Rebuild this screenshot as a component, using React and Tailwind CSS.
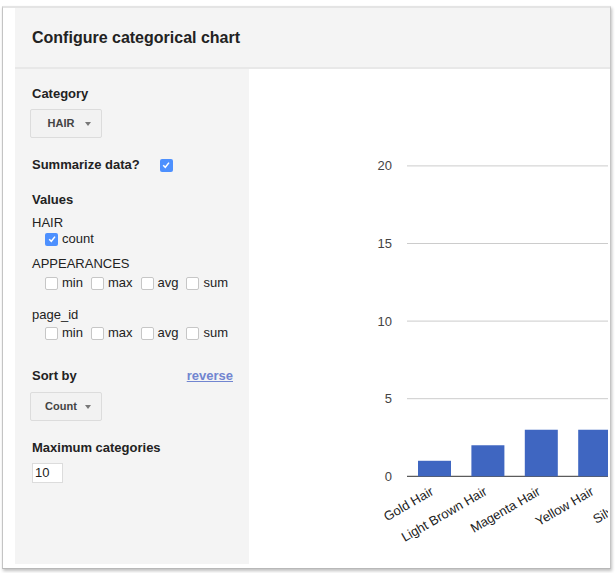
import React from "react";

const bars = [
  { label: "Gold Hair", value: 1 },
  { label: "Light Brown Hair", value: 2 },
  { label: "Magenta Hair", value: 3 },
  { label: "Yellow Hair", value: 3 },
  { label: "Silver Hair", value: 3 },
];

const ticks = [0, 5, 10, 15, 20];
const zeroY = 407.3;
const unit = 15.52;

function Check({ on }) {
  return on ? (
    <span className="inline-flex h-[13px] w-[13px] shrink-0 items-center justify-center rounded-[2px] bg-[#4d90fe]">
      <svg viewBox="0 0 10 10" className="h-[10px] w-[10px]">
        <path d="M2.2 5.2 4.3 7.3 8 2.6" fill="none" stroke="#fff" strokeWidth="1.5" />
      </svg>
    </span>
  ) : (
    <span className="inline-block h-[13px] w-[13px] shrink-0 rounded-[2px] border border-[#c6c6c6] bg-white" />
  );
}

function Dropdown({ label }) {
  return (
    <div className="ml-[-2px] flex h-[29px] w-[72px] items-center rounded-[2px] border border-[#dcdcdc] bg-[#f2f2f2] pl-[6px] pr-[10px] text-[11px] font-bold text-[#444]">
      <span className="flex-1 text-center">{label}</span>
      <span className="h-0 w-0 border-x-[3.5px] border-t-[4px] border-x-transparent border-t-[#777]" />
    </div>
  );
}

function AggRow({ className }) {
  return (
    <div className={`flex h-[16px] items-center gap-[8px] pl-[13px] ${className}`}>
      {["min", "max", "avg", "sum"].map((a) => (
        <label key={a} className="flex items-center gap-[4px]">
          <Check />
          <span>{a}</span>
        </label>
      ))}
    </div>
  );
}

function Chart() {
  return (
    <svg width="359" height="495" className="block font-['Liberation_Sans',Arial,sans-serif]">
      {ticks.map((t) => {
        const y = zeroY - t * unit;
        return (
          <g key={t}>
            <line
              x1="158"
              x2="359"
              y1={y}
              y2={y}
              stroke={t === 0 ? "#333" : "#ccc"}
              strokeWidth="1"
            />
            <text x="143" y={y + 4.5} textAnchor="end" fontSize="13" fill="#444">
              {t}
            </text>
          </g>
        );
      })}
      {bars.map((b, i) => {
        const x = 169 + i * 53.4;
        const h = b.value * unit;
        const cx = x + 16.5;
        return (
          <g key={b.label}>
            <rect x={x} y={zeroY - h} width="33" height={h} fill="#3f66c1" />
            <text
              x={cx}
              y="425"
              textAnchor="end"
              fontSize="13"
              fill="#222"
              transform={`rotate(-30 ${cx} 425)`}
            >
              {b.label}
            </text>
          </g>
        );
      })}
    </svg>
  );
}

export default function App() {
  return (
    <div className="h-[573px] w-[615px] overflow-hidden bg-white font-['Liberation_Sans',Arial,sans-serif] text-[13px] text-[#222]">
      <div className="ml-[2px] mt-[6px] w-[609px] border-x border-b border-t-2 border-x-[#c4c4c4] border-b-[#b8b8b8] border-t-[#e4e4e4] bg-white pb-[4px] pl-[12px] shadow-[1px_2px_3px_rgba(0,0,0,0.25)]">
        {/* header */}
        <div className="flex h-[61px] items-center border-b-2 border-[#e8e8e8] bg-[#f4f4f4] pl-[17px] text-[16px] font-bold">
          Configure categorical chart
        </div>

        <div className="flex h-[495px]">
          {/* sidebar */}
          <div className="w-[234px] shrink-0 bg-[#f4f4f4] pl-[17px] pr-[16px] pt-[17px]">
            <div className="h-[16px] font-bold leading-[16px]">Category</div>
            <div className="mt-[7px]">
              <Dropdown label="HAIR" />
            </div>

            <div className="mt-[19px] flex h-[16px] items-center gap-[20px] font-bold">
              <span>Summarize data?</span>
              <Check on />
            </div>

            <div className="mt-[19px] h-[16px] font-bold leading-[16px]">Values</div>
            <div className="mt-[7px] h-[16px] leading-[16px]">HAIR</div>
            <div className="flex h-[16px] items-center gap-[4px] pl-[13px]">
              <Check on />
              <span>count</span>
            </div>
            <div className="mt-[9px] h-[16px] leading-[16px]">APPEARANCES</div>
            <AggRow className="mt-[3px]" />
            <div className="mt-[16px] h-[16px] leading-[16px]">page_id</div>
            <AggRow className="mt-[2px]" />

            <div className="mt-[27px] flex h-[16px] items-center justify-between">
              <span className="font-bold">Sort by</span>
              <a className="font-bold text-[#7185d0] underline">reverse</a>
            </div>
            <div className="mt-[8px]">
              <Dropdown label="Count" />
            </div>

            <div className="mt-[19px] h-[16px] font-bold leading-[16px]">Maximum categories</div>
            <div className="mt-[7px] flex h-[20px] w-[31px] items-center border border-[#dcdcdc] bg-white pl-[2px]">
              10
            </div>
          </div>

          {/* chart */}
          <div className="flex-1 overflow-hidden bg-white">
            <Chart />
          </div>
        </div>
      </div>
    </div>
  );
}
